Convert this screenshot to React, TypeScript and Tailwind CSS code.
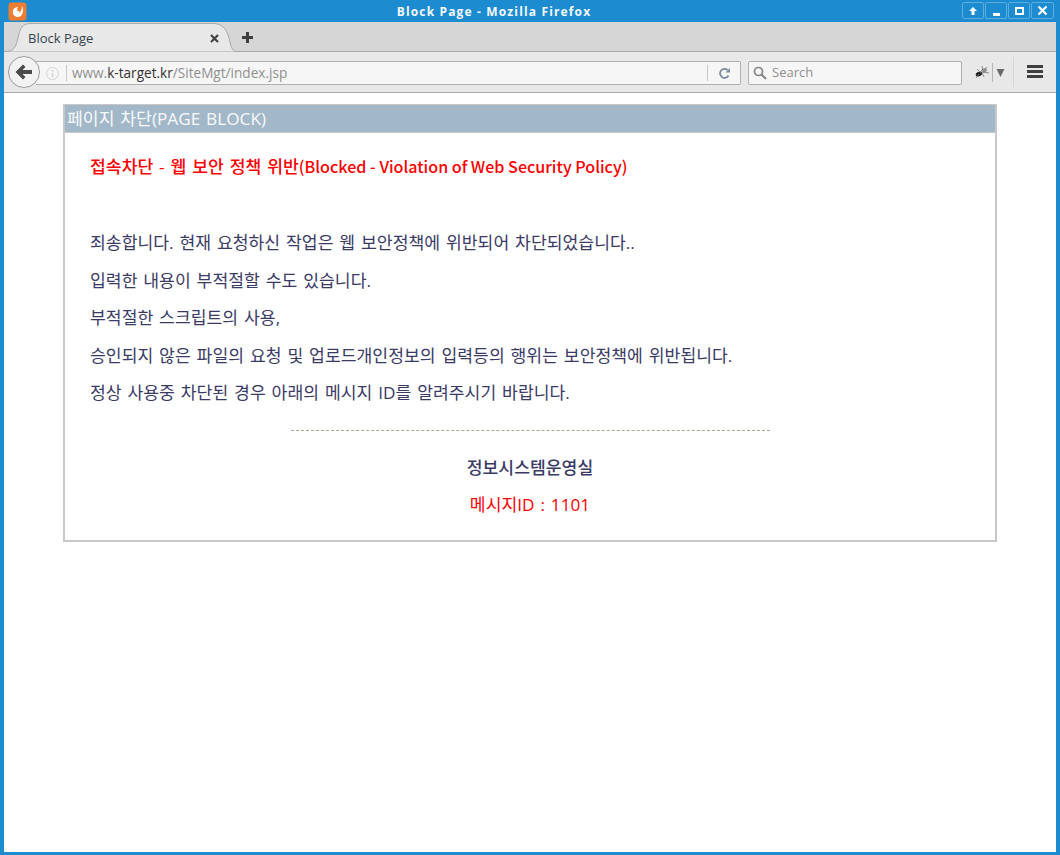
export default function App() {
  const chrome = { fontFamily: '"Open Sans", "Noto Sans", sans-serif' };
  return (
    <div className="flex h-[855px] w-[1060px] flex-col overflow-hidden border-x-[4px] border-b-[3px] border-[#1c8bcf] bg-white font-['Open_Sans','Noto_Sans_CJK_KR',sans-serif]">
      {/* title bar */}
      <div className="relative flex h-[22px] shrink-0 items-center justify-center bg-[#1c8bcf] pr-[72px] pt-[1px] text-[12px] font-bold tracking-[1.15px] text-[#f4f8fb]" style={chrome}>
        <svg className="absolute left-[4px] top-[2px]" width="19" height="19" viewBox="0 0 19 19">
          <rect x="0.5" y="0.5" width="18" height="18" rx="3" fill="#ee7d32" />
          <path d="M9.5 5a5 5 0 1 0 5.2 5.3c.7-2.2.4-4.6-.9-6.6.3 3-.6 6.4-3.6 7.6 1.1-1 1.3-1.9 1-2.4H8.7c1.2-.8 1.2-1.8 0-2.3.8-.6 1.5-.8.8-1.6Z" fill="#fff" />
        </svg>
        <span>Block Page - Mozilla Firefox</span>
        <div className="absolute right-[2px] top-[2px] flex h-[17px] gap-px">
          <div className="flex w-[22px] items-center justify-center rounded-[2px] border border-[#59aee0]">
            <svg width="10" height="10" viewBox="0 0 10 10"><path d="M5 1 9 5H6.5v4h-3V5H1Z" fill="#fff" /></svg>
          </div>
          <div className="flex w-[22px] items-end justify-center rounded-[2px] border border-[#59aee0] pb-[2px]">
            <div className="h-[3px] w-[7px] bg-white" />
          </div>
          <div className="flex w-[22px] items-center justify-center rounded-[2px] border border-[#59aee0]">
            <div className="h-[8px] w-[9px] border-2 border-white" />
          </div>
          <div className="flex w-[23px] items-center justify-center rounded-[2px] border border-[#59aee0]">
            <svg width="11" height="11" viewBox="0 0 11 11"><path d="M1.5 1.5l8 8M9.5 1.5l-8 8" stroke="#fff" strokeWidth="2.2" /></svg>
          </div>
        </div>
      </div>

      {/* tab strip */}
      <div className="flex h-[30px] shrink-0 items-end border-b border-[#a9a9a9] bg-[#d6d6d6]" style={chrome}>
        <div className="relative mb-[-1px] ml-[1px] flex h-[29px] w-[232px] items-center pl-[23px] pr-[18px] pt-[2px] text-[13px] text-[#35424e]">
          <svg className="absolute inset-0" width="232" height="29" viewBox="0 0 232 29">
            <path d="M0 28.5C9 28.5 11 24 13 15C15 4 18 1 25 .5H209C216 1 221 4 224 15C226 24 227 28.5 232 28.5Z" fill="#e8e8e8" />
            <path d="M0 28.5C9 28.5 11 24 13 15C15 4 18 1 25 .5H209C216 1 221 4 224 15C226 24 227 28.5 232 28.5" fill="none" stroke="#a9a9a9" />
          </svg>
          <span className="relative flex-1">Block Page</span>
          <svg className="relative" width="9" height="9" viewBox="0 0 9 9"><path d="M1 1l7 7M8 1 1 8" stroke="#444" strokeWidth="2.2" /></svg>
        </div>
        <svg className="mb-[8px] ml-[5px]" width="11" height="11" viewBox="0 0 11 11"><path d="M4 0h3v4h4v3H7v4H4V7H0V4h4Z" fill="#3e3e3e" /></svg>
      </div>

      {/* nav bar */}
      <div className="flex h-[41px] shrink-0 items-center border-b border-[#a9a9a9] bg-[#e8e8e8] pl-[4px]" style={chrome}>
        <div className="z-10 flex h-[32px] w-[32px] shrink-0 items-center justify-center rounded-full border border-[#9a9a9a] bg-[#f2f2f2]">
          <svg width="18" height="16" viewBox="0 0 18 16"><path d="M8 .5 10.5 3 7.5 6H17v4H7.5l3 3L8 15.500 .5 8Z" fill="#4a4a4a" /></svg>
        </div>
        <div className="ml-[-4px] mt-[1px] flex h-[24px] w-[705px] shrink-0 items-center rounded-r-[2px] border border-l-0 border-[#b0b0b0] bg-[#f6f6f6] pl-[10px] pt-[1px] text-[13.6px] text-[#8f8f8f]">
          <svg className="shrink-0" width="13" height="13" viewBox="0 0 13 13"><circle cx="6.5" cy="6.5" r="6" fill="none" stroke="#d4d4d4" /><path d="M6.5 3v1.500M6.5 6v4" stroke="#cfcfcf" strokeWidth="1.4" /></svg>
          <div className="ml-[7px] h-[16px] w-px bg-[#c8c8c8]" />
          <span className="ml-[5px] flex-1">www.<span className="text-[#333]">k-target.kr</span>/SiteMgt/index.jsp</span>
          <div className="h-[16px] w-px bg-[#c8c8c8]" />
          <div className="flex w-[32px] justify-center">
            <svg width="13" height="13" viewBox="0 0 13 13"><path d="M10.500 8.500A4.500 4.500 0 1 1 9.500 3" fill="none" stroke="#7a8b9c" strokeWidth="1.8" /><path d="M7.500 5.500h4.500V1Z" fill="#7a8b9c" /></svg>
          </div>
        </div>
        <div className="ml-[7px] mt-[1px] flex h-[24px] w-[214px] shrink-0 items-center rounded-[2px] border border-[#b0b0b0] bg-[#f6f6f6] pl-[4px] pt-[1px] text-[13px] text-[#8f8f8f]">
          <svg width="14" height="14" viewBox="0 0 14 14"><circle cx="5.500" cy="5.500" r="4" fill="none" stroke="#858585" strokeWidth="1.7" /><path d="M8.500 8.500 13 13" stroke="#858585" strokeWidth="2.2" /></svg>
          <span className="ml-[5px]">Search</span>
        </div>
        <svg className="ml-[12px]" width="16" height="14" viewBox="0 0 16 14">
          <ellipse cx="5" cy="9" rx="3.400" ry="2.200" fill="#222" transform="rotate(-25 5 9)" />
          <ellipse cx="10" cy="5.500" rx="3" ry="2.200" fill="#999" transform="rotate(-25 10 5.500)" />
          <path d="M3 4 7 8M8 1 9 6M13 2 10 6M15 8 9 7M10 12 8 8M2 13 5 9" stroke="#777" strokeWidth=".8" />
        </svg>
        <div className="ml-[2px] h-[19px] w-px bg-[#b5b5b5]" />
        <svg className="ml-[3px]" width="9" height="9" viewBox="0 0 9 9"><path d="M.5 1h8l-4 8Z" fill="#6a6a6a" /></svg>
        <div className="ml-[8px] h-[30px] w-px bg-[#d4d4d4]" />
        <div className="mb-[1px] ml-[13px] flex w-[16px] flex-col gap-[2px]">
          <div className="h-[3px] bg-[#3f3f3f]" />
          <div className="h-[3px] bg-[#3f3f3f]" />
          <div className="h-[3px] bg-[#3f3f3f]" />
        </div>
      </div>

      {/* page */}
      <div className="flex-1 pl-[59px] pt-[11px]">
        <div className="h-[438px] w-[934px] border-x-2 border-b-2 border-t border-[#c8c8c8]">
          <div className="flex h-[28px] items-center border-b border-[#c8c8c8] bg-[#a2b8c9] pl-[2px] text-[17.2px] text-[#f7f9fb] [word-spacing:1.4px]">페이지 차단(PAGE BLOCK)</div>
          <div className="px-[25px] pt-[15px] text-[17.2px] leading-[37.5px] text-[#3a3a66] [word-spacing:1.4px]">
            <p className="font-medium text-[#ff0000]">접속차단 - 웹 보안 정책 위반<span className="font-['Noto_Sans_CJK_KR'] text-[16.1px] [word-spacing:0]">(Blocked - Violation of Web Security Policy)</span></p>
            <p className="mb-[1px]">&nbsp;</p>
            <p>죄송합니다. 현재 요청하신 작업은 웹 보안정책에 위반되어 차단되었습니다..</p>
            <p>입력한 내용이 부적절할 수도 있습니다.</p>
            <p>부적절한 스크립트의 사용,</p>
            <p>승인되지 않은 파일의 요청 및 업로드개인정보의 입력등의 행위는 보안정책에 위반됩니다.</p>
            <p>정상 사용중 차단된 경우 아래의 메시지 ID를 알려주시기 바랍니다.</p>
            <div className="flex h-[37px] items-center justify-center">
              <div className="w-[479px] border-t border-dashed border-[#a8a890]" />
            </div>
            <p className="text-center font-medium">정보시스템운영실</p>
            <p className="text-center text-[#ff0000]">메시지ID : 1101</p>
          </div>
        </div>
      </div>
    </div>
  );
}
